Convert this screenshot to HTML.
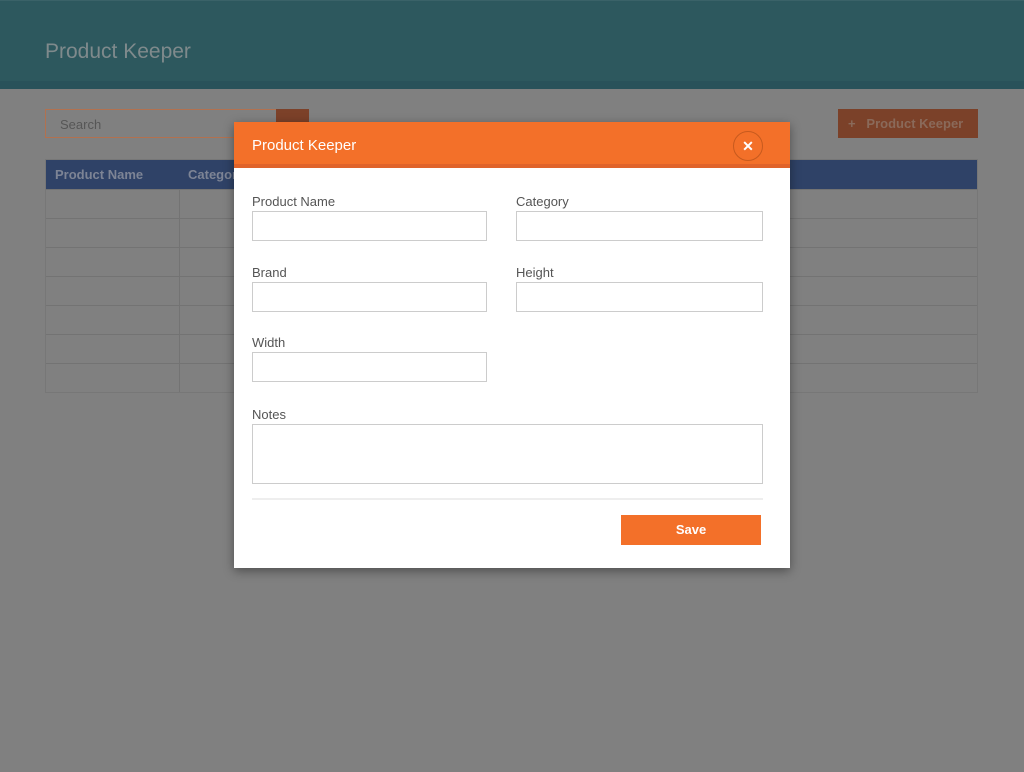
<!DOCTYPE html>
<html><head><style>
*{box-sizing:border-box;margin:0;padding:0}
body{width:1024px;height:772px;background:#808080;font-family:"Liberation Sans",sans-serif;position:relative;overflow:hidden}
.hdr{position:absolute;left:0;top:0;width:1024px;height:89px;background:#2d585e;border-top:1px solid #3a6268;border-bottom:8px solid #29525a}
.hdr span{position:absolute;left:45px;top:39px;font-size:21px;color:#7f8a8c}
.search{position:absolute;left:45px;top:109px;width:232px;height:29px;border:1px solid #b2714f;color:#565656;font-size:13px;padding:7px 14px}
.sbtn{position:absolute;left:276px;top:109px;width:33px;height:29px;background:#7c4129}
.add{position:absolute;left:838px;top:109px;width:140px;height:29px;background:#7b4129;color:#8a6a5a;font-weight:bold;font-size:13px;padding:7px 10px}
.tbl{position:absolute;left:45px;top:159px;width:933px;border:1px solid #777}
.th{height:29px;background:#2f4267;color:#7d8495;font-weight:bold;font-size:13px;position:relative}
.th span{position:absolute;top:7px}
.row{height:29px;border-top:1px solid #737373;position:relative}
.row:after{content:"";position:absolute;left:133px;top:0;bottom:0;border-left:1px solid #737373}
.modal{position:absolute;left:234px;top:122px;width:556px;height:446px;background:#fff;box-shadow:0 3px 10px rgba(0,0,0,.4)}
.mh{height:46px;background:#f37029;border-bottom:4px solid #e0632a;color:#fff;font-size:15px;padding:15px 18px}
.x{position:absolute;left:499px;top:9px;width:30px;height:30px;border:1px solid #c75a1e;border-radius:50%;color:#fff;font-weight:bold;font-size:14px;text-align:center;line-height:28px}
label{position:absolute;font-size:13px;color:#555}
.in{position:absolute;border:1px solid #ccc;height:30px;width:235px}
.sep{position:absolute;left:18px;top:376px;width:511px;border-top:2px solid #eee}
.save{position:absolute;left:387px;top:393px;width:140px;height:30px;background:#f37029;color:#fff;font-weight:bold;font-size:13px;text-align:center;line-height:30px}
</style></head><body>
<div class="hdr"><span>Product Keeper</span></div>
<div class="search">Search</div><div class="sbtn"></div>
<div class="add">+&nbsp;&nbsp; Product Keeper</div>
<div class="tbl"><div class="th"><span style="left:9px">Product Name</span><span style="left:142px">Category</span></div>
<div class="row"></div><div class="row"></div><div class="row"></div><div class="row"></div><div class="row"></div><div class="row"></div><div class="row"></div></div>
<div class="modal">
<div class="mh">Product Keeper</div><div class="x">✕</div>
<label style="left:18px;top:72px">Product Name</label><div class="in" style="left:18px;top:89px"></div>
<label style="left:282px;top:72px">Category</label><div class="in" style="left:282px;top:89px;width:247px"></div>
<label style="left:18px;top:143px">Brand</label><div class="in" style="left:18px;top:160px"></div>
<label style="left:282px;top:143px">Height</label><div class="in" style="left:282px;top:160px;width:247px"></div>
<label style="left:18px;top:213px">Width</label><div class="in" style="left:18px;top:230px"></div>
<label style="left:18px;top:285px">Notes</label><div class="in" style="left:18px;top:302px;width:511px;height:60px"></div>
<div class="sep"></div>
<div class="save">Save</div>
</div>
</body></html>
